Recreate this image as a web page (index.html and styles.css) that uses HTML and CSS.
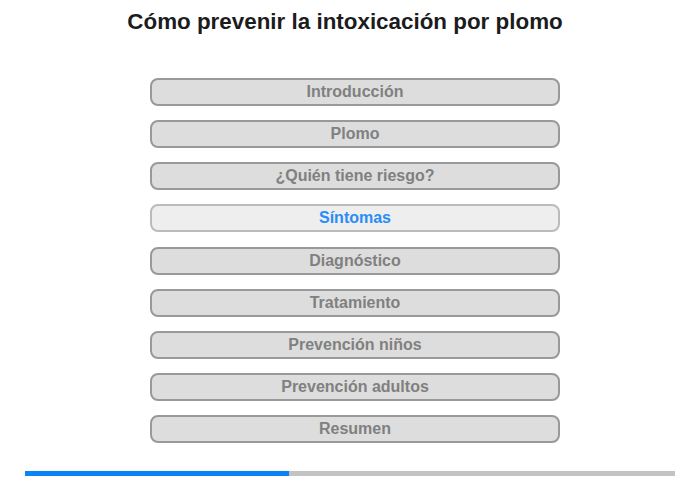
FILE: index.html
```html
<!DOCTYPE html>
<html lang="es">
<head>
<meta charset="utf-8">
<title>Cómo prevenir la intoxicación por plomo</title>
<link rel="stylesheet" href="styles.css">
</head>
<body>
<div class="page">
  <h1 class="title">Cómo prevenir la intoxicación por plomo</h1>
  <nav class="menu">
    <div class="item">Introducción</div>
    <div class="item">Plomo</div>
    <div class="item">¿Quién tiene riesgo?</div>
    <div class="item active">Síntomas</div>
    <div class="item">Diagnóstico</div>
    <div class="item">Tratamiento</div>
    <div class="item">Prevención niños</div>
    <div class="item">Prevención adultos</div>
    <div class="item">Resumen</div>
  </nav>
  <div class="progress"><div class="progress-fill" style="width:264px"></div></div>
</div>
</body>
</html>
```
FILE: styles.css
```css
html, body {
  margin: 0;
  padding: 0;
  background: #fff;
}
body {
  font-family: "Liberation Sans", Arial, sans-serif;
}
.page {
  width: 700px;
  height: 480px;
  display: flex;
  flex-direction: column;
}
.title {
  margin: 0;
  padding-top: 8px;
  height: 78px;
  flex: none;
  box-sizing: border-box;
  font-size: 22.4px;
  line-height: 28px;
  font-weight: bold;
  color: #1c1c1c;
  text-align: center;
  padding-right: 10px;
}
.menu {
  display: flex;
  flex-direction: column;
  gap: 14.125px;
  margin-left: 150px;
  width: 410px;
}
.item {
  box-sizing: border-box;
  height: 28px;
  border: 2px solid #999;
  border-radius: 8px;
  background: #ddd;
  color: #808080;
  font-size: 16px;
  font-weight: bold;
  line-height: 24px;
  text-align: center;
}
.item.active {
  background: #eee;
  border-color: #bbb;
  color: #2a8cf5;
}
.progress {
  margin: 28px 0 0 25px;
  width: 650px;
  height: 5px;
  flex: none;
  background: #c3c3c3;
}
.progress-fill {
  height: 100%;
  background: #0a84f5;
}
```
